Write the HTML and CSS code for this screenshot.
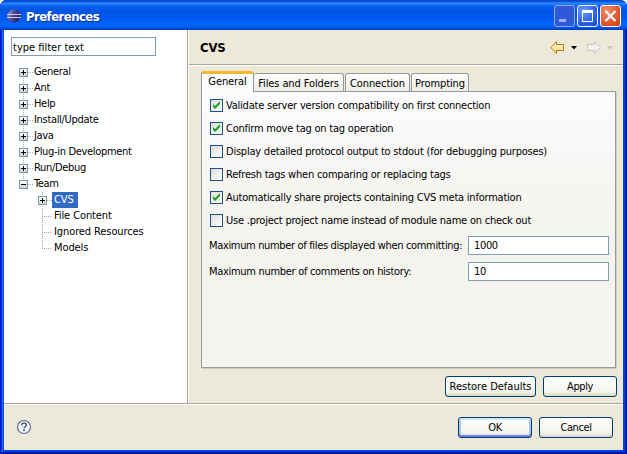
FILE: index.html
```html
<!DOCTYPE html>
<html lang="en">
<head>
<meta charset="utf-8">
<title>Preferences</title>
<link rel="stylesheet" href="styles.css">
</head>
<body>
<div class="window">
  <header class="titlebar">
    <svg class="logo" width="16" height="16" viewBox="0 0 16 16">
      <defs><linearGradient id="orb" x2="1" y2=".4"><stop offset="0" stop-color="#b0a6c8"/><stop offset=".5" stop-color="#554b94"/><stop offset="1" stop-color="#29205f"/></linearGradient></defs>
      <circle cx="8" cy="8" r="6.500" fill="url(#orb)"/>
      <path d="M1 6.500h14M1 9.500h14" stroke="#c5cdf2"/>
    </svg>
    <h1>Preferences</h1>
    <div class="controls">
      <span class="ctl min"><svg width="19" height="20"><path d="M4 14.500h7" stroke="#9bb0f0" stroke-width="3"/></svg></span>
      <span class="ctl"><svg width="19" height="20"><path d="M4.500 5v10.500h10V5" fill="none" stroke="#fff"/><path d="M4 5.500h11" stroke="#fff" stroke-width="3"/></svg></span>
      <span class="ctl close"><svg width="19" height="20"><path d="M4.500 5l10 10M14.500 5l-10 10" stroke="#fff" stroke-width="2.200"/></svg></span>
    </div>
  </header>
  <div class="main">
    <aside class="sidebar">
      <div class="filter">type filter text</div>
      <ul class="tree">
        <li><i class="box plus"></i><span>General</span></li>
        <li><i class="box plus"></i><span>Ant</span></li>
        <li><i class="box plus"></i><span>Help</span></li>
        <li><i class="box plus"></i><span>Install/Update</span></li>
        <li><i class="box plus"></i><span>Java</span></li>
        <li><i class="box plus"></i><span>Plug-in Development</span></li>
        <li><i class="box plus"></i><span>Run/Debug</span></li>
        <li class="last"><i class="box"></i><span>Team</span></li>
      </ul>
      <ul class="tree sub">
        <li><i class="box plus"></i><span class="selected">CVS</span></li>
        <li class="leaf"><span>File Content</span></li>
        <li class="leaf"><span>Ignored Resources</span></li>
        <li class="leaf last"><span>Models</span></li>
      </ul>
    </aside>
    <section class="page">
      <div class="heading">
        <h2>CVS</h2>
        <svg class="nav" width="64" height="14" viewBox="0 0 64 14">
          <defs><linearGradient id="gold" x2="0" y2="1"><stop stop-color="#fffbe0"/><stop offset="1" stop-color="#f4d675"/></linearGradient></defs>
          <path d="M.7 6.500L6.500.7V3.500h7v6h-7v2.800z" fill="url(#gold)" stroke="#b8781c"/>
          <path d="M21 5h6l-3 3.500z" fill="#000"/>
          <path d="M50.300 6.500L44.500.7V3.500h-7v6h7v2.800z" fill="#f2f1ed" stroke="#c4c3bf"/>
          <path d="M57 5h6l-3 3.500z" fill="#c9c7ba"/>
        </svg>
      </div>
      <div class="content">
        <nav class="tabs">
          <div class="tab active"><span>General</span></div>
          <div class="tab files"><span>Files and Folders</span></div>
          <div class="tab conn"><span>Connection</span></div>
          <div class="tab prompt"><span>Prompting</span></div>
        </nav>
        <div class="panel">
          <div class="check"><i class="cb"><svg width="11" height="11"><path d="M2 4v3l2 2 5-5V1L4 6z" fill="#21a121"/></svg></i><span>Validate server version compatibility on first connection</span></div>
          <div class="check"><i class="cb"><svg width="11" height="11"><path d="M2 4v3l2 2 5-5V1L4 6z" fill="#21a121"/></svg></i><span>Confirm move tag on tag operation</span></div>
          <div class="check"><i class="cb"></i><span>Display detailed protocol output to stdout (for debugging purposes)</span></div>
          <div class="check"><i class="cb"></i><span>Refresh tags when comparing or replacing tags</span></div>
          <div class="check"><i class="cb"><svg width="11" height="11"><path d="M2 4v3l2 2 5-5V1L4 6z" fill="#21a121"/></svg></i><span>Automatically share projects containing CVS meta information</span></div>
          <div class="check"><i class="cb"></i><span>Use .project project name instead of module name on check out</span></div>
          <div class="field"><label>Maximum number of files displayed when committing:</label><div class="input">1000</div></div>
          <div class="field history"><label>Maximum number of comments on history:</label><div class="input">10</div></div>
        </div>
        <div class="actions">
          <div class="btn wide">Restore Defaults</div>
          <div class="btn">Apply</div>
        </div>
      </div>
    </section>
  </div>
  <footer class="footer">
    <svg class="help" width="16" height="16"><circle cx="8" cy="8" r="6.500" fill="#f4f8fc" stroke="#5a6f91" stroke-width="1.200"/><path d="M5.700 6.300V6a2.300 2 0 1 1 3.800 1.500Q8 8.500 8 9.500" fill="none" stroke="#40587f" stroke-width="1.500"/><path d="M7 10.500h2v1.500H7z" fill="#40587f"/></svg>
    <div class="btn ok">OK</div>
    <div class="btn">Cancel</div>
  </footer>
</div>
</body>
</html>
```

FILE: styles.css
```css
* { box-sizing: border-box; }
body { margin: 0; background: #fff; color: #000; font: 11px/16px "DejaVu Sans Condensed", "DejaVu Sans", sans-serif; font-stretch: condensed; letter-spacing: -0.4px; white-space: nowrap; }
h1, h2, ul { margin: 0; padding: 0; }
.window { width: 627px; height: 454px; padding: 0 4px 4px; display: flex; flex-direction: column; background: #ece9d8; border-radius: 7px 7px 0 0; box-shadow: inset 1px 0 #0019cf, inset -1px 0 #00138c, inset 0 -1px #00138c, inset 2px 0 #0831d9, inset -2px -2px #001ea0, inset 3px 0 #166aee, inset -4px -4px #0441e0, inset 4px 0 #0855dd; overflow: hidden; }
.titlebar { flex: 0 0 30px; margin: 0 -4px; padding: 5px 6px 0 6px; display: flex; align-items: flex-start; background: linear-gradient(#0540c5 0, #0a5ee8 2px, #2f8bff 3px, #0865f0 6px, #0054e3 10px, #0058ee 18px, #0066ff 25px, #005df5 27px, #0037c0 30px); }
.logo { margin-top: 3px; }
h1 { margin: 4px 0 0 4px; font: bold 13px/16px "DejaVu Sans Condensed", sans-serif; font-stretch: condensed; letter-spacing: -0.55px; color: #fff; text-shadow: 1px 1px #0a2c90; }
.controls { display: flex; gap: 2px; margin-left: auto; }
.ctl { width: 21px; height: 22px; border: 1px solid #fff; border-radius: 3px; background: radial-gradient(circle at 30% 25%, #6f9cf5, #285ce0 65%, #1b49c8); }
.ctl svg { display: block; }
.min { border-color: #8aa8ec; background: #3059d8; }
.close { background: radial-gradient(circle at 30% 25%, #f18a68, #e1532c 65%, #c4401b); }
.main { flex: 0 0 373px; display: flex; }
.sidebar { width: 184px; padding: 7px 0 0 7px; background: #fff; border-right: 1px solid #aca899; }
.filter { width: 145px; height: 19px; padding: 1px 1px; line-height: 17px; letter-spacing: 0; border: 1px solid #7f9db9; }
.tree { list-style: none; margin: 8px 0 0 8px; letter-spacing: -0.32px; }
.tree.sub { margin: 0 0 0 27px; letter-spacing: -0.1px; }
.tree li { height: 16px; display: flex; align-items: center; background: repeating-linear-gradient(90deg, #aca899 0 1px, transparent 1px 2px) 9px 8px / 5px 1px no-repeat, repeating-linear-gradient(#aca899 0 1px, transparent 1px 2px) 4px 0 / 1px 16px no-repeat; }
.tree:not(.sub) li:first-child { background-size: 5px 1px, 1px 8px; background-position: 9px 8px, 4px 8px; }
.tree li.last { background-size: 5px 1px, 1px 8px; }
.tree li.leaf { padding-left: 14px; background-position: 4px 8px, 4px 0; background-size: 10px 1px, 1px 16px; }
.tree li.leaf.last { background-size: 10px 1px, 1px 8px; }
.box { flex: none; width: 9px; height: 9px; margin-right: 4px; border: 1px solid #7898b5; background: linear-gradient(#000, #000) 1px 3px / 5px 1px no-repeat, linear-gradient(#fff, #d6d1c0); }
.sub .box { margin-right: 5px; }
.box.plus { background: linear-gradient(#000, #000) 1px 3px / 5px 1px no-repeat, linear-gradient(#000, #000) 3px 1px / 1px 5px no-repeat, linear-gradient(#fff, #d6d1c0); }
.tree span { padding: 0 2px; }
.tree .selected { width: 26px; background: #316ac5; color: #fff; }
.page { flex: 1; border-left: 1px solid #fff; }
.heading { height: 36px; display: flex; align-items: center; padding: 0 9px 0 11px; border-bottom: 1px solid #fff; box-shadow: inset 0 -1px #aca899; }
h2 { font: bold 13px/16px "DejaVu Sans Condensed", sans-serif; font-stretch: condensed; letter-spacing: -0.2px; padding-top: 1px; }
.nav { margin-left: auto; }
.content { padding: 5px 6px 0 12px; }
.tabs { height: 20px; display: flex; align-items: flex-end; letter-spacing: -0.1px; }
.tab { position: relative; height: 18px; text-align: center; line-height: 19px; background: linear-gradient(#fff, #ecece4); border: 1px solid #919b9c; border-bottom: 0; border-radius: 3px 3px 0 0; margin-right: 1px; }
.active { width: 53px; height: 21px; margin: 0 0 -1px; z-index: 1; line-height: 16px; background: #fcfcfc; border-top: 3px solid #f9b732; }
.files { width: 90px; border-left: 0; }
.conn { width: 65px; }
.prompt { width: 58px; }
.panel { width: 415px; height: 277px; padding: 7px 6px 0 8px; border: 1px solid #919b9c; background: linear-gradient(#fcfcfe, #f4f3ee 45%, #f4f3ee); box-shadow: 1px 1px #d0cebf; }
.check { height: 23px; display: flex; align-items: flex-start; letter-spacing: -0.22px; }
.check span { margin: -1px 0 0 3px; }
.cb { width: 13px; height: 13px; border: 1px solid #1c5180; background: linear-gradient(135deg, #dcdcd7, #fff); }
.cb svg { display: block; }
.field { height: 26px; display: flex; align-items: flex-start; justify-content: space-between; margin-left: -1px; position: relative; top: -1px; letter-spacing: -0.34px; }
.history { letter-spacing: -0.3px; }
.field label { margin-top: 2px; }
.input { width: 141px; height: 19px; padding: 0 5px; line-height: 18px; border: 1px solid #7f9db9; background: #fff; }
.actions { display: flex; gap: 7px; justify-content: flex-end; margin-top: 8px; }
.btn { width: 74px; height: 21px; line-height: 20px; text-align: center; border: 1px solid #003c74; border-radius: 3px; background: linear-gradient(#fff, #f3f2ec 80%, #d9d3c4); }
.wide { width: 91px; letter-spacing: 0; }
.ok { box-shadow: inset 0 2px #cee7ff, inset 0 -2px #6982ee, inset 2px 0 #a9c4f5, inset -2px 0 #a9c4f5; }
.footer { flex: 1; display: flex; gap: 7px; padding: 12px 10px 0 12px; border-top: 1px solid #aca899; box-shadow: inset 0 1px #fff; }
.help { margin: 3px auto 0 0; }
.footer .btn { margin-top: 1px; }
```
